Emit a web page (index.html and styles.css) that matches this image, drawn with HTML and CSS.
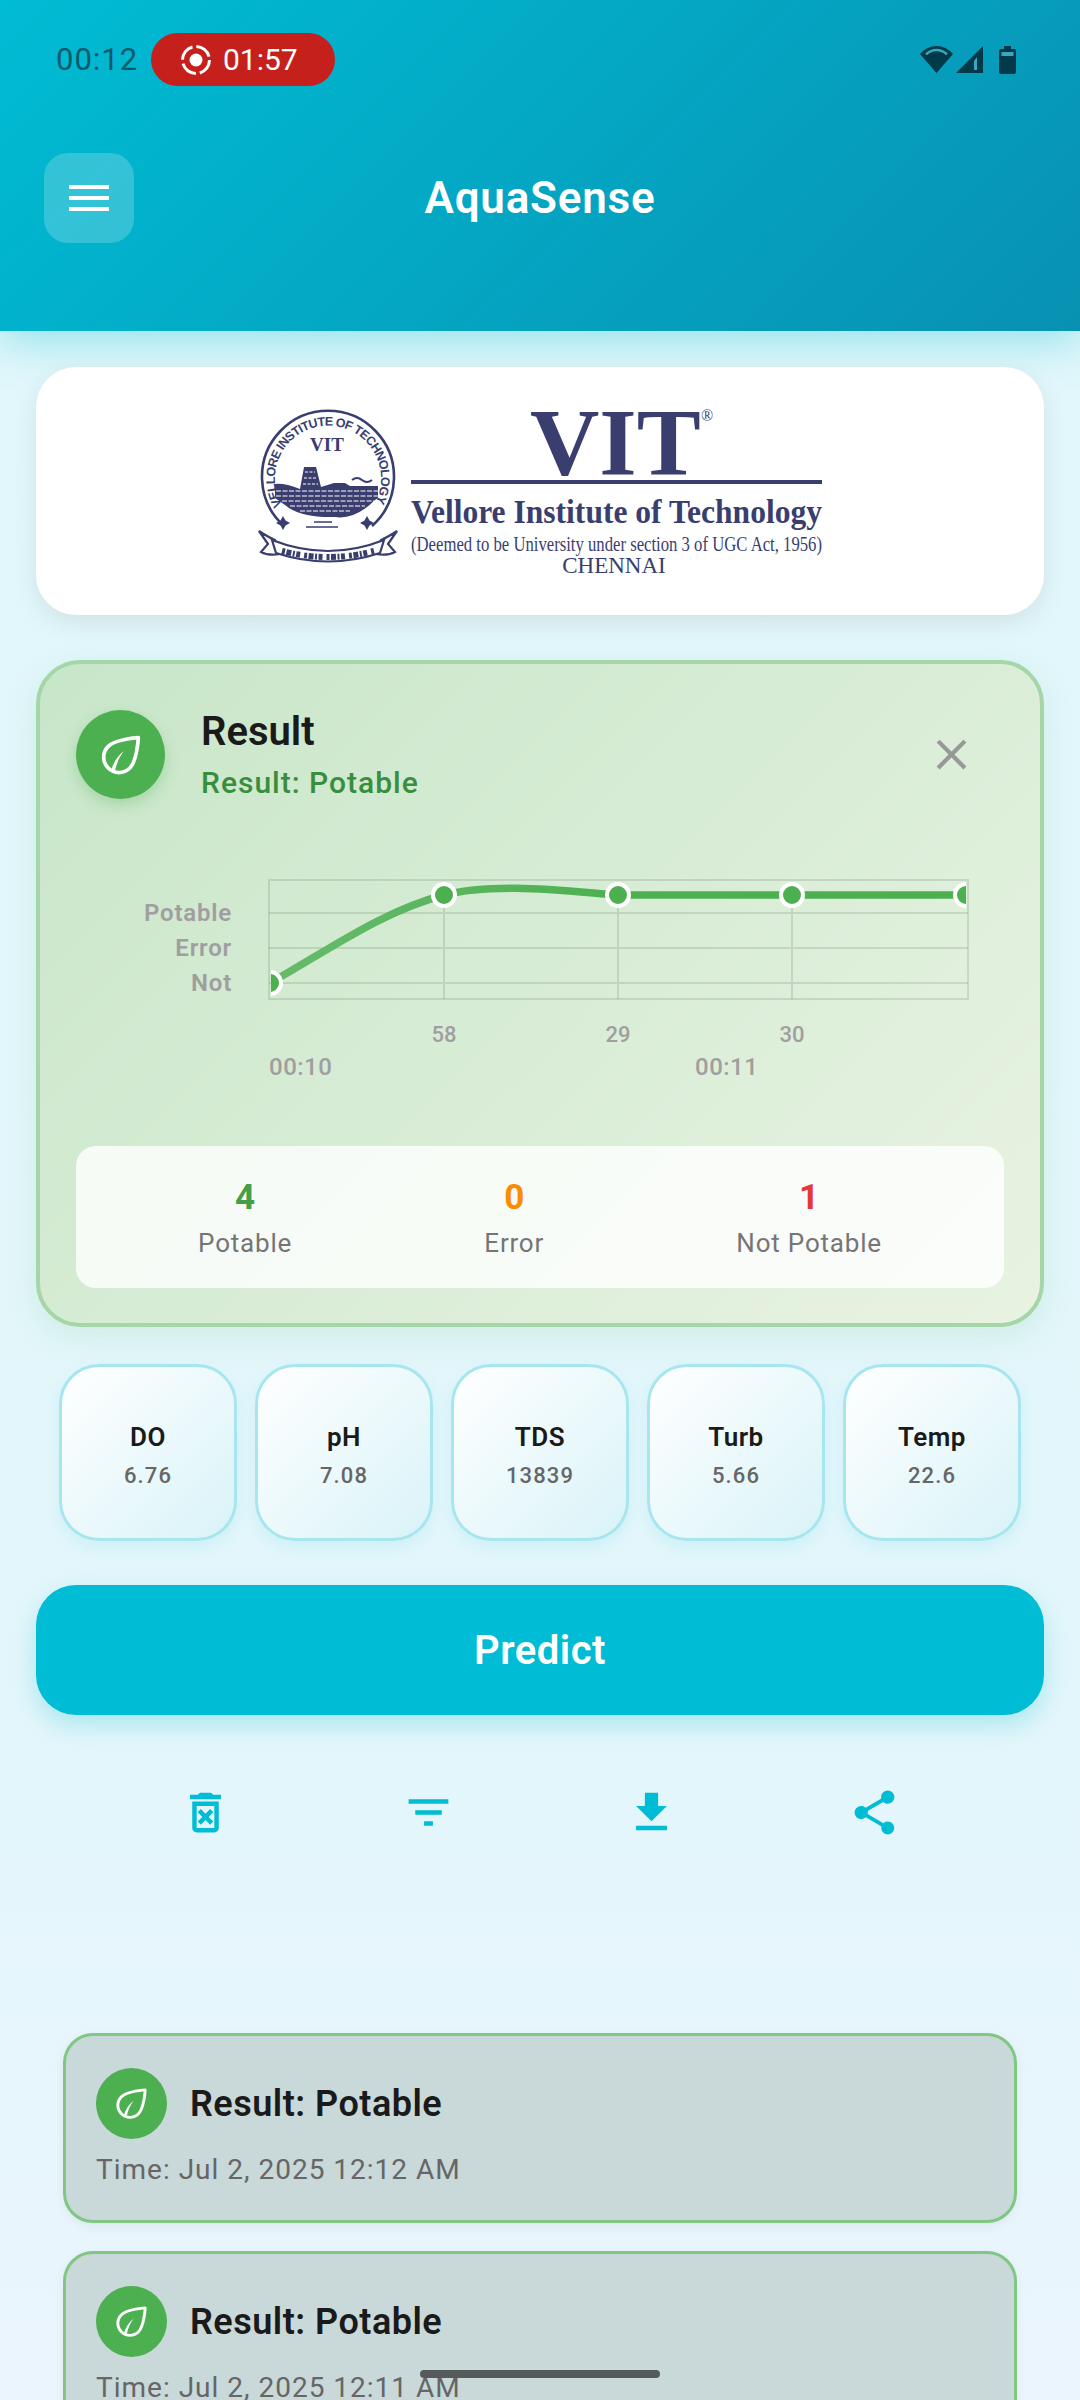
FILE: index.html
```html
<!DOCTYPE html>
<html lang="en">
<head>
  <meta charset="UTF-8">
  <meta name="viewport" content="width=device-width, initial-scale=1.0">
  <title>AquaSense</title>
  <link rel="stylesheet" href="styles.css">
</head>
<body>

  <header class="app-header">
    <div class="status-bar">
      <span class="clock">00:12</span>
      <span class="rec-pill">
        <svg class="rec-icon" viewBox="0 0 32 32">
          <circle cx="16" cy="16" r="13.5" fill="none" stroke="#fff" stroke-width="3" stroke-dasharray="17.2 4"/>
          <circle cx="16" cy="16" r="6.5" fill="#fff"/>
        </svg>
        01:57
      </span>
      <div class="status-icons">
        <svg class="wifi" viewBox="0 0 33 27">
          <path d="M16.5 27 0 8Q7 0 16.5 0T33 8Z" fill="#033a4a"/>
          <path d="M6 8.4Q10.5 4 16.5 4T27 8.4" fill="none" stroke="#3aa7c0" stroke-width="2.6"/>
        </svg>
        <svg class="signal" viewBox="0 0 27 27">
          <path d="M27 0V27H0Z" fill="#033a4a"/>
          <path d="M21 11V24H18V15Z" fill="#3aa7c0"/>
        </svg>
        <svg class="battery" viewBox="0 0 17 28">
          <path d="M5 0H12V3H15Q17 3 17 5V26Q17 28 15 28H2Q0 28 0 26V5Q0 3 2 3H5Z" fill="#033a4a"/>
          <rect x="2.5" y="6" width="12" height="4" fill="#3aa7c0"/>
        </svg>
      </div>
    </div>
    <div class="toolbar">
      <button class="menu-btn">
        <svg viewBox="0 0 40 26" width="40" height="26">
          <path d="M0 2H40M0 13H40M0 24H40" stroke="#fff" stroke-width="4"/>
        </svg>
      </button>
      <h1 class="app-title">AquaSense</h1>
    </div>
  </header>

  <main class="content">

    <section class="logo-card">
      <svg class="vit-logo" viewBox="140 371 800 240" width="800" height="240">
        <defs>
          <clipPath id="sealClip"><circle cx="328" cy="478" r="62"/></clipPath>
          <path id="sealArc" d="M282 505A53 53 0 1 1 374 505"/>
        </defs>

        <!-- seal -->
        <g class="seal">
          <path d="M284 526A66 66 0 1 1 372 526" fill="none" stroke="#393e6f" stroke-width="2.6"/>
          <text class="seal-ring"><textPath href="#sealArc" textLength="218" lengthAdjust="spacing">VELLORE INSTITUTE OF TECHNOLOGY</textPath></text>
          <text class="seal-vit" x="327" y="451" text-anchor="middle">VIT</text>
          <g clip-path="url(#sealClip)">
            <path d="M275 484Q285 483 300 489L304 467H316L321 487L334 483H345L350 486H378V498L375 500Q355 520 335 517Q300 518 285 505L275 498Z" fill="#393e6f"/>
            <path d="M276 491H378M276 496H378M282 501H374M290 506H365M300 511H350" stroke="#fff" stroke-width="1" stroke-dasharray="5 1.5"/>
            <path d="M352 480q5-4 10 0t10 0" fill="none" stroke="#393e6f" stroke-width="2"/>
            <path d="M305 472H315M304 478H317M303 484H318" stroke="#fff" stroke-width="1" stroke-dasharray="3 1.5"/>
          </g>
          <path d="M283 516l2.5 4.5 4.5 2.5-4.5 2.500-2.500 4.500-2.500-4.500-4.500-2.500 4.500-2.500zM367 516l2.500 4.500 4.500 2.500-4.500 2.500-2.500 4.500-2.500-4.500-4.500-2.500 4.500-2.500z" fill="#393e6f"/>
          <path d="M314 522h18M306 527h32" stroke="#393e6f" stroke-width="1.500"/>
          <path d="M259 531Q268 537 275 540L280 554Q268 556 261 552L268 544Z M397 531Q388 537 381 540L376 554Q388 556 395 552L388 544Z" fill="#fff" stroke="#393e6f" stroke-width="2.200"/>
          <path d="M272 540Q328 562 384 540L380 553Q328 570 276 553Z" fill="#fff" stroke="#393e6f" stroke-width="2.200"/>
          <path d="M282 551Q328 563 374 551" fill="none" stroke="#393e6f" stroke-width="6" stroke-dasharray="3 1.500 5 1.500 2 1.500 4 4"/>
        </g>

        <!-- wordmark -->
        <text class="logo-vit" x="530" y="475">VIT</text>
        <text class="logo-reg" x="701" y="421">®</text>
        <rect x="411" y="480" width="411" height="4" fill="#393e6f"/>
        <text class="logo-name" x="411" y="523" textLength="411" lengthAdjust="spacingAndGlyphs">Vellore Institute of Technology</text>
        <text class="logo-deemed" x="411" y="551" textLength="411" lengthAdjust="spacingAndGlyphs">(Deemed to be University under section 3 of UGC Act, 1956)</text>
        <text class="logo-city" x="614" y="573" text-anchor="middle">CHENNAI</text>
      </svg>
    </section>

    <section class="result-card">
      <div class="result-head">
        <div class="leaf-badge">
          <svg class="leaf" viewBox="0 0 24 24" width="52" height="52">
            <path d="M20 4S9.500 4.600 6.100 8C3.300 10.800 3.300 15.200 6.100 18C8.900 20.800 13.300 20.800 16.100 18C19.500 14.500 20 4 20 4Z" fill="none" stroke="#fff" stroke-width="1.700" stroke-linejoin="round"/>
            <path d="M7.700 18.500C8.500 15.500 10.300 12.600 13.300 10.200C11.300 13 10 15.700 9.300 19Z" fill="#fff"/>
          </svg>
        </div>
        <div class="result-text">
          <h2 class="result-title">Result</h2>
          <p class="result-sub">Result: Potable</p>
        </div>
        <svg class="close-icon" viewBox="0 0 24 24" width="51" height="51">
          <path d="M19 6.410L17.590 5 12 10.590 6.410 5 5 6.410 10.590 12 5 17.590 6.410 19 12 13.410 17.590 19 19 17.590 13.410 12z" fill="#979997"/>
        </svg>
      </div>

      <svg class="chart" viewBox="76 860 928 225" width="928" height="225">
        <defs>
          <clipPath id="plotClip"><rect x="271" y="870" width="695" height="130"/></clipPath>
          <linearGradient id="lineGrad" x1="270" y1="0" x2="640" y2="0" gradientUnits="userSpaceOnUse">
            <stop offset="0" stop-color="#66bb6a"/>
            <stop offset="1" stop-color="#4caf50"/>
          </linearGradient>
        </defs>
        <g class="grid">
          <rect x="269" y="879" width="699" height="119" fill="none"/>
          <path d="M269 912H968M269 947H968M269 982H968M444 894V998M618 894V998M792 894V998"/>
        </g>
        <g clip-path="url(#plotClip)">
          <path d="M270 982C330 948 383 910 444 894C495 881 565 890 618 894L966 894" fill="none" stroke="url(#lineGrad)" stroke-width="7.500"/>
          <g class="dots">
            <circle cx="270" cy="982" r="11"/>
            <circle cx="444" cy="894" r="11"/>
            <circle cx="618" cy="894" r="11"/>
            <circle cx="792" cy="894" r="11"/>
            <circle cx="966" cy="894" r="11"/>
          </g>
        </g>
        <g class="y-labels">
          <text x="232" y="920">Potable</text>
          <text x="232" y="955">Error</text>
          <text x="232" y="990">Not</text>
        </g>
        <g class="x-labels">
          <text x="444" y="1041">58</text>
          <text x="618" y="1041">29</text>
          <text x="792" y="1041">30</text>
          <text class="x-time" x="269" y="1074">00:10</text>
          <text class="x-time" x="695" y="1074">00:11</text>
        </g>
      </svg>

      <div class="stats">
        <div class="stat"><span class="stat-num green">4</span><span class="stat-label">Potable</span></div>
        <div class="stat"><span class="stat-num orange">0</span><span class="stat-label">Error</span></div>
        <div class="stat"><span class="stat-num red">1</span><span class="stat-label">Not Potable</span></div>
      </div>
    </section>

    <section class="params">
      <div class="param"><span class="param-name">DO</span><span class="param-value">6.76</span></div>
      <div class="param"><span class="param-name">pH</span><span class="param-value">7.08</span></div>
      <div class="param"><span class="param-name">TDS</span><span class="param-value">13839</span></div>
      <div class="param"><span class="param-name">Turb</span><span class="param-value">5.66</span></div>
      <div class="param"><span class="param-name">Temp</span><span class="param-value">22.6</span></div>
    </section>

    <button class="predict-btn">Predict</button>

    <section class="actions">
      <svg viewBox="0 0 24 24" width="53" height="53"><path d="M14.120 10.470L12 12.590l-2.130-2.120-1.410 1.410L10.590 14l-2.120 2.120 1.410 1.410L12 15.410l2.120 2.120 1.410-1.410L13.410 14l2.120-2.120zM15.500 4l-1-1h-5l-1 1H5v2h14V4zM6 19c0 1.100.9 2 2 2h8c1.100 0 2-.9 2-2V7H6v12zM8 9h8v10H8V9z"/></svg>
      <svg viewBox="0 0 24 24" width="53" height="53"><path d="M10 18h4v-2h-4v2zM3 6v2h18V6H3zm3 7h12v-2H6v2z"/></svg>
      <svg viewBox="0 0 24 24" width="53" height="53"><path d="M19 9h-4V3H9v6H5l7 7 7-7zM5 18v2h14v-2H5z"/></svg>
      <svg viewBox="0 0 24 24" width="53" height="53"><path d="M18 16.080c-.76 0-1.440.3-1.960.77L8.910 12.700c.05-.23.09-.46.09-.7s-.04-.47-.09-.7l7.050-4.110c.54.5 1.250.81 2.040.81 1.660 0 3-1.340 3-3s-1.340-3-3-3-3 1.340-3 3c0 .24.04.47.09.7L8.040 9.810C7.500 9.310 6.790 9 6 9c-1.660 0-3 1.340-3 3s1.340 3 3 3c.79 0 1.500-.31 2.040-.81l7.120 4.160c-.05.21-.08.43-.08.65 0 1.610 1.310 2.920 2.920 2.920 1.610 0 2.920-1.310 2.920-2.920s-1.310-2.920-2.920-2.920z"/></svg>
    </section>

    <section class="history">
      <article class="history-card">
        <div class="history-head">
          <div class="leaf-badge small">
            <svg class="leaf" viewBox="0 0 24 24" width="41" height="41">
              <path d="M20 4S9.500 4.600 6.100 8C3.300 10.800 3.300 15.200 6.100 18C8.900 20.800 13.300 20.800 16.100 18C19.500 14.500 20 4 20 4Z" fill="none" stroke="#fff" stroke-width="1.700" stroke-linejoin="round"/>
              <path d="M7.700 18.500C8.500 15.500 10.300 12.600 13.300 10.200C11.300 13 10 15.700 9.300 19Z" fill="#fff"/>
            </svg>
          </div>
          <span class="history-title">Result: Potable</span>
        </div>
        <p class="history-time">Time: Jul 2, 2025 12:12 AM</p>
      </article>
      <article class="history-card">
        <div class="history-head">
          <div class="leaf-badge small">
            <svg class="leaf" viewBox="0 0 24 24" width="41" height="41">
              <path d="M20 4S9.500 4.600 6.100 8C3.300 10.800 3.300 15.200 6.100 18C8.900 20.800 13.300 20.800 16.100 18C19.500 14.500 20 4 20 4Z" fill="none" stroke="#fff" stroke-width="1.700" stroke-linejoin="round"/>
              <path d="M7.700 18.500C8.500 15.500 10.300 12.600 13.300 10.200C11.300 13 10 15.700 9.300 19Z" fill="#fff"/>
            </svg>
          </div>
          <span class="history-title">Result: Potable</span>
        </div>
        <p class="history-time">Time: Jul 2, 2025 12:11 AM</p>
      </article>
    </section>

  </main>

  <div class="home-bar"></div>

</body>
</html>
```

FILE: styles.css
```css
html, body {
  margin: 0;
  padding: 0;
}

body {
  position: relative;
  width: 1080px;
  height: 2400px;
  overflow: hidden;
  font-family: Roboto, "Noto Sans", sans-serif;
  background: linear-gradient(to bottom, #e0f7fa, #e3f6fb 75%, #ebf5fe);
  color: #1a1a1a;
}

h1, h2, p {
  margin: 0;
}

button {
  border: none;
  font-family: inherit;
}

/* header */
.app-header {
  box-sizing: border-box;
  height: 331px;
  padding-top: 33px;
  background: linear-gradient(135deg, #00bcd4, #0891b2);
  box-shadow: 0 10px 40px rgba(0, 188, 212, 0.35);
}

.status-bar {
  display: flex;
  align-items: center;
  height: 53px;
  padding: 0 64px 0 56px;
}

.clock {
  width: 83px;
  font-size: 31px;
  letter-spacing: 1px;
  white-space: nowrap;
  color: #0a5a6c;
}

.rec-pill {
  display: flex;
  align-items: center;
  gap: 11px;
  width: 184px;
  height: 53px;
  box-sizing: border-box;
  margin-left: 12px;
  padding-left: 29px;
  border-radius: 27px;
  background: #c5201c;
  color: #fff;
  font-size: 30px;
}

.rec-icon {
  width: 32px;
  height: 32px;
}

.status-icons {
  display: flex;
  align-items: center;
  margin-left: auto;
}

.wifi {
  width: 33px;
  height: 27px;
}

.signal {
  width: 27px;
  height: 27px;
  margin-left: 3px;
}

.battery {
  width: 17px;
  height: 28px;
  margin-left: 16px;
}

.toolbar {
  display: grid;
  grid-template-columns: 90px 1fr 90px;
  align-items: center;
  margin-top: 67px;
  padding: 0 44px;
}

.menu-btn {
  display: flex;
  align-items: center;
  justify-content: center;
  width: 90px;
  height: 90px;
  padding: 0;
  border-radius: 24px;
  background: rgba(255, 255, 255, 0.2);
}

.app-title {
  text-align: center;
  font-size: 44px;
  font-weight: 600;
  letter-spacing: 0.8px;
  color: #fff;
}

/* main column */
.content {
  padding: 36px 36px 0;
}

.logo-card {
  display: flex;
  align-items: center;
  justify-content: center;
  height: 248px;
  border-radius: 40px;
  background: #fff;
  box-shadow: 0 8px 24px rgba(0, 0, 0, 0.08);
}

.seal-ring {
  font-family: "Liberation Sans", sans-serif;
  font-size: 12.5px;
  font-weight: 700;
  fill: #393e6f;
}

.seal-vit {
  font-family: "Liberation Serif", serif;
  font-size: 19px;
  font-weight: 700;
  fill: #393e6f;
}

.logo-vit, .logo-name, .logo-deemed, .logo-city, .logo-reg {
  font-family: "Liberation Serif", serif;
  fill: #393e6f;
}

.logo-vit {
  font-size: 96px;
  font-weight: 700;
}

.logo-reg {
  font-size: 16px;
}

.logo-name {
  font-size: 33px;
  font-weight: 700;
}

.logo-deemed {
  font-size: 20px;
}

.logo-city {
  font-size: 23px;
}

/* result card */
.result-card {
  box-sizing: border-box;
  height: 667px;
  margin-top: 45px;
  padding: 46px 36px 0;
  border: 4px solid #a5d6a7;
  border-radius: 44px;
  background: linear-gradient(135deg, #c8e6c9, #e8f3e2);
  box-shadow: 0 10px 30px rgba(76, 175, 80, 0.12);
}

.result-head {
  display: flex;
  align-items: flex-start;
  height: 89px;
}

.leaf-badge {
  display: flex;
  align-items: center;
  justify-content: center;
  flex-shrink: 0;
  width: 89px;
  height: 89px;
  border-radius: 50%;
  background: #4caf50;
  box-shadow: 0 6px 14px rgba(76, 175, 80, 0.3);
}

.leaf-badge.small {
  width: 71px;
  height: 71px;
  box-shadow: none;
}

.result-text {
  margin-left: 36px;
}

.result-title {
  font-size: 40px;
  line-height: 44px;
  font-weight: 600;
}

.result-sub {
  margin-top: 11px;
  font-size: 30px;
  line-height: 36px;
  font-weight: 500;
  letter-spacing: 1px;
  color: #388e3c;
}

.close-icon {
  margin: 19px 27px 0 auto;
}

.chart {
  display: block;
  margin-top: 62px;
}

.grid rect, .grid path {
  stroke: rgba(0, 0, 0, 0.1);
  stroke-width: 2;
}

.dots circle {
  fill: #4caf50;
  stroke: #fff;
  stroke-width: 4;
}

.y-labels text {
  font-size: 24px;
  font-weight: 600;
  letter-spacing: 0.8px;
  text-anchor: end;
  fill: #a09ea0;
}

.x-labels text {
  font-size: 22px;
  font-weight: 500;
  text-anchor: middle;
  fill: #a09ea0;
}

.x-labels .x-time {
  font-size: 24px;
  letter-spacing: 0.5px;
  text-anchor: start;
}

.stats {
  display: flex;
  justify-content: space-around;
  align-items: center;
  height: 142px;
  margin-top: 60px;
  padding: 0 26px;
  border-radius: 20px;
  background: rgba(255, 255, 255, 0.8);
}

.stat {
  display: flex;
  flex-direction: column;
  align-items: center;
  gap: 9px;
  padding-top: 3px;
}

.stat-num {
  font-size: 35px;
  line-height: 40px;
  font-weight: 700;
}

.green { color: #43a047; }
.orange { color: #fb8c00; }
.red { color: #e53935; }

.stat-label {
  font-size: 26px;
  line-height: 32px;
  letter-spacing: 0.8px;
  color: #757575;
}

/* parameter tiles */
.params {
  display: flex;
  justify-content: space-between;
  margin-top: 37px;
  padding: 0 23px;
}

.param {
  display: flex;
  flex-direction: column;
  align-items: center;
  justify-content: center;
  gap: 11px;
  box-sizing: border-box;
  width: 178px;
  height: 177px;
  padding-top: 6px;
  border: 3px solid #a8e6ef;
  border-radius: 40px;
  background: linear-gradient(135deg, #ffffff, #d9f3f8);
  box-shadow: 0 6px 16px rgba(0, 188, 212, 0.1);
}

.param-name {
  font-size: 26px;
  line-height: 30px;
  font-weight: 600;
  letter-spacing: 0.5px;
}

.param-value {
  font-size: 22px;
  line-height: 26px;
  font-weight: 500;
  letter-spacing: 1.1px;
  color: #666;
}

/* predict + actions */
.predict-btn {
  display: block;
  width: 100%;
  height: 130px;
  margin-top: 44px;
  border-radius: 40px;
  background: #00bcd4;
  color: #fff;
  font-size: 40px;
  font-weight: 600;
  letter-spacing: 0.5px;
  box-shadow: 0 10px 24px rgba(0, 188, 212, 0.25);
}

.actions {
  display: grid;
  grid-template-columns: repeat(4, 223px);
  justify-items: center;
  margin-top: 71px;
  padding-left: 58px;
}

.actions svg {
  display: block;
  fill: #00bcd4;
}

/* history list */
.history {
  display: flex;
  flex-direction: column;
  gap: 28px;
  margin-top: 194px;
  padding: 0 27px;
}

.history-card {
  box-sizing: border-box;
  height: 190px;
  padding: 32px 30px 0;
  border: 3px solid #81c784;
  border-radius: 30px;
  background: #c9d8d8;
  box-shadow: 0 4px 12px rgba(0, 0, 0, 0.05);
}

.history-head {
  display: flex;
  align-items: center;
  gap: 23px;
}

.history-title {
  font-size: 36px;
  font-weight: 600;
  letter-spacing: 0.5px;
}

.history-time {
  margin-top: 14px;
  font-size: 28px;
  line-height: 34px;
  letter-spacing: 1px;
  color: #666;
}

.home-bar {
  position: absolute;
  left: 420px;
  top: 2370px;
  width: 240px;
  height: 8px;
  border-radius: 4px;
  background: #555a5a;
}
```
